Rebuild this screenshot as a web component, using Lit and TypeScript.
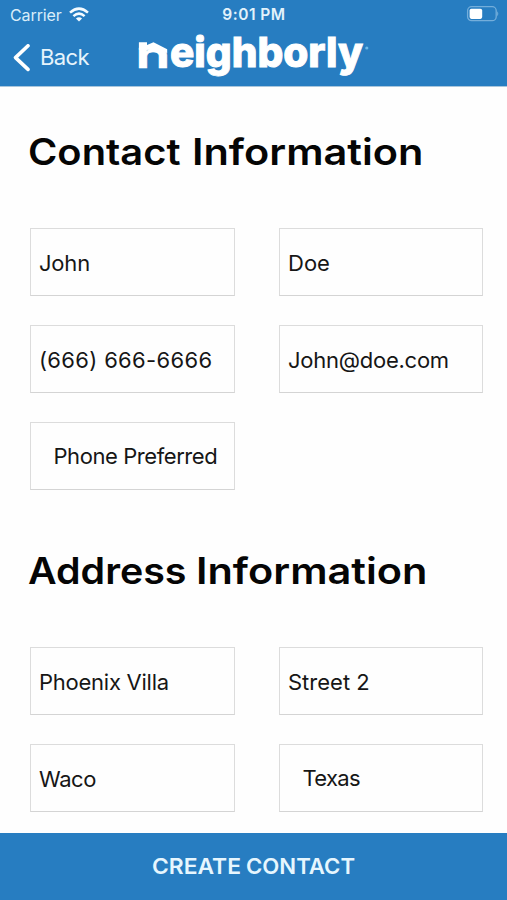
import { LitElement, html, css, svg } from "lit";
import { customElement, property } from "lit/decorators.js";

interface Field {
  value: string;
  tracking?: number;
  picker?: boolean;
}

interface Word {
  text: string;
  x: number;
  width: number;
}

/** A single line of display type, each word stretched to its own measure. */
@customElement("display-line")
class DisplayLine extends LitElement {
  @property({ attribute: false }) words: Word[] = [];
  @property({ type: Number }) size = 20;
  @property({ type: Number }) weight = 600;

  static styles = css`
    :host { display: block; }
    .line { display: block; overflow: visible; }
    .type { font-family: Inter, "Liberation Sans", sans-serif; fill: currentColor; }
  `;

  render() {
    const last = this.words[this.words.length - 1];
    return html`<svg class="line" width=${last.x + last.width} height=${Math.round(this.size * 1.2)}>
      ${this.words.map(
        (w) => svg`<text class="type" x=${w.x} y=${this.size} font-size=${this.size} font-weight=${this.weight}
          textLength=${w.width} lengthAdjust="spacingAndGlyphs">${w.text}</text>`
      )}
    </svg>`;
  }
}

@customElement("form-section")
class FormSection extends LitElement {
  @property({ attribute: false }) heading: Word[] = [];
  @property({ attribute: false }) fields: Field[] = [];

  static styles = css`
    :host { display: block; }
    .heading { height: 45px; margin: 0 0 0 -2px; color: #050505; }
    .grid {
      display: grid;
      grid-template-columns: 205px 204px;
      grid-auto-rows: 68px;
      column-gap: 44px;
      row-gap: 29px;
      margin-top: 55px;
    }
    .field {
      box-sizing: border-box;
      display: flex;
      align-items: center;
      border: 1px solid #dcdcdc;
      border-bottom-color: #d4d4d4;
      padding: 1px 0 0 8px;
      font: 400 22px/28px Inter, "Liberation Sans", sans-serif;
      color: #161616;
      white-space: nowrap;
    }
    .picker { padding: 0 0 1px 22.5px; }
  `;

  render() {
    return html`
      <div class="heading">
        <display-line .words=${this.heading} .size=${36.5} .weight=${600}></display-line>
      </div>
      <div class="grid">
        ${this.fields.map(
          (f) => html`<div class="field ${f.picker ? "picker" : ""}" style="letter-spacing:${f.tracking ?? 0}px">${f.value}</div>`
        )}
      </div>
    `;
  }
}

@customElement("app-root")
class AppRoot extends LitElement {
  static styles = css`
    :host {
      display: flex;
      flex-direction: column;
      height: 900px;
      background: #fefefe;
      font-family: Inter, "Liberation Sans", sans-serif;
    }
    .top {
      flex: none;
      box-sizing: border-box;
      height: 87px;
      background: #277dc1;
      border-bottom: 1px solid #a9c6dc;
      color: #f2faff;
    }
    .status {
      display: grid;
      grid-template-columns: 1fr auto 1fr;
      align-items: center;
      height: 29px;
      padding: 0 8px 0 10px;
      font-size: 16px;
    }
    .carrier { display: flex; align-items: center; gap: 7px; color: #d9edf9; letter-spacing: -0.1px; }
    .time { font-weight: 600; font-size: 15.5px; letter-spacing: 0.5px; margin-left: -1px; color: #e2f2fb; }
    .battery { justify-self: end; display: block; margin-top: -1px; }
    .nav { display: grid; grid-template-columns: 130px 1fr; height: 57px; }
    .back { display: flex; align-items: center; gap: 9px; padding-left: 13px; font-size: 22px; letter-spacing: -0.6px; color: #e6f4fc; }
    .back-label { margin-top: -1px; }
    .logo { display: block; overflow: visible; }
    .wordmark {
      font-family: Inter, "Liberation Sans", sans-serif;
      font-weight: 800;
      font-size: 41px;
      fill: #fff;
      stroke: #fff;
      stroke-width: 1;
    }
    .lead { font-size: 36px; font-weight: 600; stroke-width: 0.6; }
    .main { flex: 1; padding: 41px 0 0 30px; display: flex; flex-direction: column; gap: 57px; min-height: 0; }
    .create {
      flex: none;
      box-sizing: border-box;
      display: flex;
      justify-content: center;
      align-items: center;
      height: 67px;
      padding: 0 1px 3px 0;
      background: #277dc1;
      color: #e6f6fe;
    }
  `;

  private contact: Field[] = [
    { value: "John", tracking: -0.2 },
    { value: "Doe" },
    { value: "(666) 666-6666", tracking: 0.33 },
    { value: "John@doe.com", tracking: -0.25 },
    { value: "Phone Preferred", tracking: -0.43, picker: true },
  ];

  private address: Field[] = [
    { value: "Phoenix Villa", tracking: -0.25 },
    { value: "Street 2" },
    { value: "Waco", tracking: -0.4 },
    { value: "Texas", tracking: -0.7, picker: true },
  ];

  render() {
    return html`
      <header class="top">
        <div class="status">
          <div class="carrier">
            <span>Carrier</span>
            <svg width="20" height="15" viewBox="0 0 20 15" fill="none" stroke="#f4fbff" stroke-width="2.5">
              <path d="M1 5.6 Q10 -2.4 19 5.6" />
              <path d="M4.4 9.2 Q10 4 15.6 9.2" />
              <path d="M10 14.6 L6.9 11.5 Q10 8.8 13.1 11.5 Z" fill="#f4fbff" stroke="none" />
            </svg>
          </div>
          <div class="time">9:01 PM</div>
          <svg class="battery" width="33" height="16" viewBox="0 0 33 16">
            <rect x="1.6" y="0.7" width="28.6" height="14" rx="4" fill="none" stroke="#74aedb" stroke-width="1.3" />
            <rect x="3.6" y="2.7" width="12.6" height="10.2" rx="1.8" fill="#fff" />
            <path d="M31.2 5.2 Q33.4 7.7 31.2 10.2 Z" fill="#74aedb" />
          </svg>
        </div>
        <div class="nav">
          <div class="back">
            <svg width="18" height="28" viewBox="0 0 18 28" fill="none" stroke="#fff" stroke-width="3.6" stroke-linecap="round" stroke-linejoin="round">
              <path d="M15 1.8 L2.5 13.6 L15 25.4" />
            </svg>
            <span class="back-label">Back</span>
          </div>
          <svg class="logo" width="242" height="57" viewBox="130 29 242 57">
            <text class="wordmark lead" x="135.6" y="67.7" textLength="34.8" lengthAdjust="spacingAndGlyphs">n</text><text class="wordmark" x="170" y="67.4" textLength="193" lengthAdjust="spacingAndGlyphs">eighborly</text>
            <path d="M138.9 42.3 H147 V45 L153.5 42.3 L167.2 49.2 V53 L156 49.5 L146 50 L138.9 50 Z" fill="#fff" />
            <circle cx="366.8" cy="48" r="1.6" fill="#6db9e8" />
          </svg>
        </div>
      </header>
      <main class="main">
        <form-section
          .heading=${[{ text: "Contact", x: 0, width: 152.5 }, { text: "Information", x: 164, width: 231.5 }]}
          .fields=${this.contact}
        ></form-section>
        <form-section
          .heading=${[{ text: "Address", x: 0, width: 158.5 }, { text: "Information", x: 168, width: 231.5 }]}
          .fields=${this.address}
        ></form-section>
      </main>
      <footer class="create">
        <display-line
          .words=${[{ text: "CREATE", x: 0, width: 89 }, { text: "CONTACT", x: 94, width: 109 }]}
          .size=${22}
          .weight=${600}
        ></display-line>
      </footer>
    `;
  }
}
